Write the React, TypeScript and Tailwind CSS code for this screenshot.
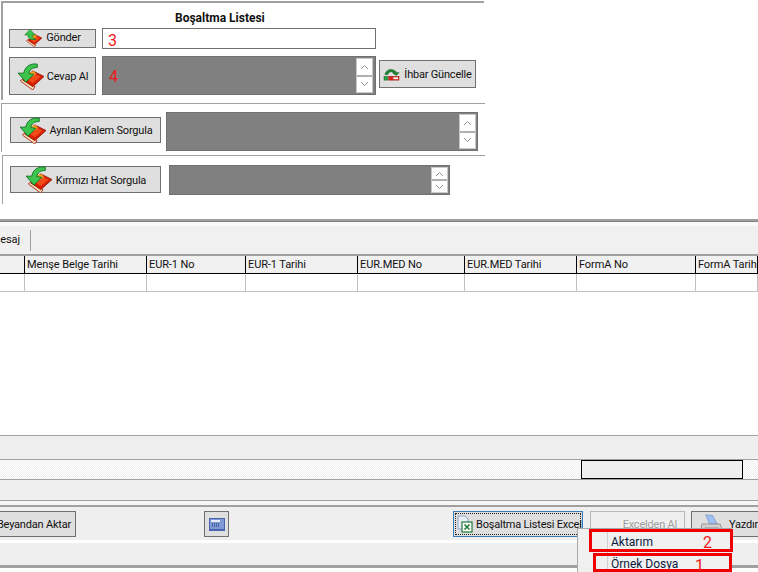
const font = "font-['Roboto',Arial,sans-serif]";

function Book({ size, up = false }: { size: number; up?: boolean }) {
  return (
    <svg width={size} height={size} viewBox="0 0 24 24" className="shrink-0">
      <path d="M3 16 L14 24 L16 21 L5 14 Z" fill="#f8e0b8" stroke="#a8261a" strokeWidth="0.8" />
      <path d="M5 15 L14 21 L24 12 L14 7 Z" fill="#d81e05" stroke="#8a1203" strokeWidth="0.7" />
      <path d="M8 14 L14 9 L21 12 L14 18 Z" fill="#f04a18" />
      <path d="M9 9 L15 7 L17 10 L10 14 Z" fill="#f5a020" />
      {up ? (
        <path d="M8 0.5 L15 8 L11 8 L11 11 L16 14 L9 14 L5.5 11 L5.5 8 L1 8 Z" fill="#3cc44c" stroke="#0f6e22" strokeWidth="0.8" />
      ) : (
        <path d="M18 1 C12 0 7 3 6 9 L1 9 L8 17 L15 10 L10.5 9.5 C11 6 13.5 4 18 4 Z" fill="#3cc44c" stroke="#0f6e22" strokeWidth="0.8" />
      )}
    </svg>
  );
}

function Spin({ w, h }: { w: number; h: number }) {
  return (
    <div className="flex flex-col bg-white border border-[#c8c8c8] shrink-0" style={{ width: w, height: h }}>
      <div className="flex-1 flex items-center justify-center border-b border-[#b0b0b0]">
        <svg width="9" height="6" viewBox="0 0 9 6"><path d="M1 5 L4.5 1.5 L8 5" fill="none" stroke="#909090" /></svg>
      </div>
      <div className="flex-1 flex items-center justify-center border-t border-[#b0b0b0]">
        <svg width="9" height="6" viewBox="0 0 9 6"><path d="M1 1 L4.5 4.5 L8 1" fill="none" stroke="#909090" /></svg>
      </div>
    </div>
  );
}

function Btn({ className = "", children }: { className?: string; children: React.ReactNode }) {
  return (
    <div className={`flex items-center justify-center bg-[#dfdfdf] border border-[#707070] text-[#111] text-[11px] tracking-[-0.2px] shrink-0 ${className}`}>
      {children}
    </div>
  );
}

const cols: [string, number][] = [
  ["", 25],
  ["Menşe Belge Tarihi", 122],
  ["EUR-1 No", 99],
  ["EUR-1 Tarihi", 112],
  ["EUR.MED No", 107],
  ["EUR.MED Tarihi", 112],
  ["FormA No", 119],
  ["FormA Tarihi", 62],
];

export default function App() {
  return (
    <div className={`${font} relative w-[758px] h-[572px] overflow-hidden bg-white text-[#111]`}>
      {/* upper panels */}
      <div className="h-[219px] flex flex-col pt-px">
        <div className="ml-px w-[483px] h-[99px] border-t-2 border-l-2 border-[#a0a0a0] flex flex-col">
          <div className="h-[22px] pt-[8px] pl-[172px] text-[12px] font-bold leading-[14px]">Boşaltma Listesi</div>
          <div className="flex items-center pl-[6px] gap-[6px] h-[26px]">
            <Btn className="w-[87px] h-[19px] gap-[4px]">
              <Book size={18} up />
              <span className="pt-[1px]">Gönder</span>
            </Btn>
            <div className="w-[274px] h-[21px] border border-[#707070] bg-white text-[#f01818] text-[16px] leading-[23px] pl-[5px]">3</div>
          </div>
          <div className="flex items-center pl-[6px] mt-[5px]">
            <Btn className="mt-px w-[87px] h-[38px] gap-[3px]">
              <Book size={27} />
              <span className="pt-[2px]">Cevap Al</span>
            </Btn>
            <div className="ml-[6px] w-[274px] h-[39px] bg-[#808080] border border-[#707070] flex items-center justify-between pr-[2px] pl-[6px]">
              <span className="text-[#f01818] text-[16px] pt-[3px]">4</span>
              <Spin w={17} h={35} />
            </div>
            <Btn className="ml-[3px] mb-[3px] w-[97px] h-[28px] gap-[4px]">
              <svg width="17" height="15" viewBox="0 0 18 16" className="shrink-0">
                <path d="M2 8 C3 3 9 0 15 6 L17 6 L14 9 L10 6 L12 6 C9 4 6 5 5 8 Z" fill="#1f8a35" stroke="#0f5a20" strokeWidth="0.6" />
                <rect x="1" y="10" width="4" height="4" fill="#2aa33d" stroke="#0f5a20" strokeWidth="0.5" />
                <rect x="6" y="10" width="11" height="4" fill="#d8261a" stroke="#8a1203" strokeWidth="0.5" />
                <rect x="11" y="11" width="5" height="2" fill="#f6f6f6" />
              </svg>
              <span className="whitespace-nowrap pt-[2px]">İhbar Güncelle</span>
            </Btn>
          </div>
        </div>
        <div className="mt-[3px] ml-px w-[484px] h-[49px] border-t border-l border-[#a0a0a0] flex items-start pl-[8px] pt-[8px]">
          <Btn className="mt-[5px] w-[151px] h-[26px] gap-[4px]">
            <Book size={27} />
            <span className="whitespace-nowrap pt-[2px]">Ayrılan Kalem Sorgula</span>
          </Btn>
          <div className="ml-[5px] w-[312px] h-[39px] bg-[#808080] border border-[#707070] flex items-center justify-end pr-[1px]">
            <Spin w={17} h={35} />
          </div>
        </div>
        <div className="mt-[3px] ml-[2px] w-[483px] h-[49px] border-t border-l border-[#a0a0a0] flex items-start pl-[7px] pt-[9px]">
          <Btn className="mt-px w-[151px] h-[27px] gap-[4px]">
            <Book size={27} />
            <span className="whitespace-nowrap pt-[4px]">Kırmızı Hat Sorgula</span>
          </Btn>
          <div className="ml-[8px] w-[281px] h-[30px] bg-[#808080] border border-[#707070] flex items-center justify-end pr-[1px]">
            <Spin w={17} h={26} />
          </div>
        </div>
      </div>

      {/* tabs and table */}
      <div className="h-[3px] bg-[#a0a0a0] border-b border-[#808080]" />
      <div className="h-[4px] bg-[#fafafa]" />
      <div className="h-[28px] bg-[#f0f0f0] flex items-center text-[11px] tracking-[-0.1px]">
        <div className="h-[21px] w-[31px] border-r border-[#a0a0a0] flex items-center justify-end pr-[10px]">esaj</div>
      </div>
      <div className="flex h-[20px] bg-[#f0f0f0] border-t-2 border-b border-t-[#a0a0a0] border-b-black text-[11px] tracking-[-0.1px] overflow-hidden">
        {cols.map(([t, w], i) => (
          <div key={i} className="shrink-0 border-r border-black pl-[2px] leading-[18px] whitespace-nowrap overflow-hidden" style={{ width: w }}>
            {t}
          </div>
        ))}
      </div>
      <div className="flex h-[18px] border-b border-[#c0c0c0]">
        {cols.map(([, w], i) => (
          <div key={i} className="shrink-0 border-r border-[#c0c0c0]" style={{ width: w }} />
        ))}
      </div>
      <div className="h-[143px] bg-white" />

      {/* status strips */}
      <div className="h-[24px] bg-[#efefef] border-t border-[#a0a0a0]" />
      <div className="h-[20px] border-t border-[#a0a0a0] bg-[repeating-conic-gradient(#f0f0f0_0_25%,#ffffff_0_50%)] bg-[length:2px_2px] flex justify-end pr-[15px]">
        <div className="w-[162px] h-[19px] bg-[#efefef] border border-black" />
      </div>
      <div className="h-[21px] bg-[#efefef] border-t border-[#a0a0a0]" />
      <div className="h-[5px] border-t border-[#a0a0a0] bg-[#f6f6f6]" />

      {/* action bar */}
      <div className="h-[2px] bg-[#a0a0a0]" />
      <div className="h-[33px] bg-[#efefef] flex items-start pt-[4px] text-[11px] tracking-[-0.2px] overflow-hidden">
        <Btn className="ml-[-15px] w-[91px] h-[26px] justify-end pr-[4px]">
          <span className="whitespace-nowrap pt-[2px]">Beyandan Aktar</span>
        </Btn>
        <div className="ml-[128px] w-[25px] h-[26px] bg-[#dfdfdf] border border-[#707070] flex items-center justify-center shrink-0">
          <svg width="16" height="13" viewBox="0 0 16 13">
            <rect x="0.5" y="0.5" width="15" height="11" fill="#7f98d6" stroke="#4a64ae" />
            <rect x="2" y="2" width="9" height="2" fill="#e6ecfa" />
            <path d="M3 6h8M3 8h8" stroke="#1c2f6e" strokeDasharray="1 1" />
            <rect x="0" y="11" width="16" height="2" fill="#4a64ae" />
          </svg>
        </div>
        <div className="ml-[224px] w-[130px] h-[26px] bg-[#dfdfdf] border border-[#3a7cb8] p-px shrink-0">
          <div className="w-full h-full border border-dotted border-[#222] flex items-center gap-[3px] pl-[1px]">
            <svg width="16" height="18" viewBox="0 0 16 18" className="shrink-0">
              <path d="M1 1 H8 L11 4 V14 H1 Z" fill="#e8eef8" stroke="#8fa3c8" />
              <rect x="5" y="7" width="10" height="10" fill="#fff" stroke="#1f7a35" strokeWidth="1.2" />
              <path d="M7.5 9.5 L12.5 14.5 M12.5 9.5 L7.5 14.5" stroke="#1f7a35" strokeWidth="1.6" />
            </svg>
            <span className="whitespace-nowrap pt-[2px]">Boşaltma Listesi Excel</span>
          </div>
        </div>
        <div className="ml-[7px] w-[95px] h-[26px] bg-[#efefef] border border-[#b8b8b8] text-[#a0a0a0] flex items-center justify-end pr-[7px] shrink-0">
          <span className="whitespace-nowrap pt-[2px]">Excelden Al</span>
        </div>
        <div className="ml-[6px] w-[80px] h-[26px] bg-[#dfdfdf] border border-[#707070] flex items-center gap-[5px] pl-[8px] shrink-0">
          <svg width="24" height="20" viewBox="0 0 25 20" className="shrink-0">
            <path d="M6 0.5 L13 1 L18 10 H10 Z" fill="#9fc0f2" stroke="#6f8ec4" strokeWidth="0.7" />
            <path d="M2 10 H21 L23 16 H1 Z" fill="#d0d0d0" stroke="#777" strokeWidth="0.7" />
            <rect x="5" y="14" width="14" height="4" fill="#f2f2f2" stroke="#888" strokeWidth="0.7" />
          </svg>
          <span className="whitespace-nowrap pt-[2px]">Yazdır</span>
        </div>
      </div>
      <div className="h-[3px] bg-white" />
      <div className="h-[22px] bg-[#efefef]" />
      <div className="h-[3px] bg-[#a0a0a0]" />

      {/* popup menu */}
      <div className="absolute left-[577px] top-[528px] w-[155px] h-[44px] bg-[#f0f0f0] border-l border-t border-[#a8a8a8] text-[12px] text-[#0a1a3a]">
        <div className="absolute left-[29px] top-0 bottom-0 w-px bg-[#d0d0d0]" />
        <div className="absolute left-[33px] top-[5px] leading-[16px]">Aktarım</div>
        <div className="absolute left-[33px] top-[27px] leading-[16px]">Örnek Dosya</div>
      </div>

      {/* annotations */}
      <div className="absolute left-[589px] top-[529px] w-[144px] h-[23px] border-[3px] border-[#f00000] text-[#f01818] text-[16px] leading-[22px] pl-[111px]">2</div>
      <div className="absolute left-[593px] top-[553px] w-[139px] h-[19px] border-[3px] border-[#f00000] text-[#f01818] text-[16px] leading-[19px] pl-[99px]">1</div>
    </div>
  );
}
